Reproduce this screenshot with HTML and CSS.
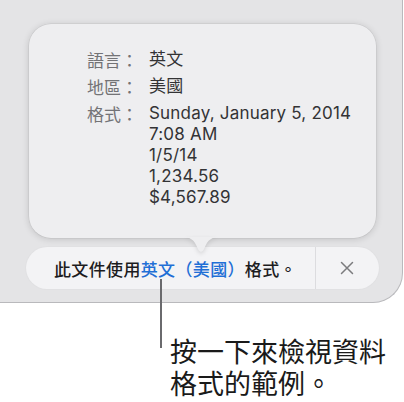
FILE: index.html
```html
<!DOCTYPE html>
<html lang="zh-Hant">
<head>
<meta charset="utf-8">
<link rel="stylesheet" href="styles.css">
</head>
<body>
<div class="stage">
  <div class="window">
    <div class="popover">
      <div class="info">
        <div class="label">語言：</div>
        <div class="value">英文</div>
        <div class="label">地區：</div>
        <div class="value">美國</div>
        <div class="label">格式：</div>
        <div class="value">Sunday, January 5, 2014<br>7:08 AM<br>1/5/14<br>1,234.56<br>$4,567.89</div>
      </div>
      <svg class="arrow" width="40" height="17" viewBox="0 0 40 17">
        <path d="M0 0 C 9 0, 13 2, 16.5 11 Q 20 18.5 23.5 11 C 27 2, 31 0, 40 0 Z" fill="#eeeef0"/>
      </svg>
    </div>
    <div class="bar">
      <div class="message">此文件使用<span class="link">英文（美國）</span>格式。</div>
      <div class="close">
        <svg width="14" height="14" viewBox="0 0 14 14"><path d="M1.5 1.5 L12.5 12.5 M12.5 1.5 L1.5 12.5" stroke="#7b7b7e" stroke-width="1.5" stroke-linecap="round"/></svg>
      </div>
    </div>
  </div>
  <div class="leader"></div>
  <div class="callout">按一下來檢視資料<br>格式的範例。</div>
</div>
</body>
</html>
```
FILE: styles.css
```css
html, body {
  margin: 0;
  padding: 0;
  background: #ffffff;
}
.stage {
  position: relative;
  width: 404px;
  height: 402px;
  overflow: hidden;
  font-family: "Inter", "Noto Sans CJK TC", sans-serif;
}
.window {
  box-sizing: border-box;
  width: 403px;
  height: 303px;
  background: #e4e4e6;
  border-right: 1px solid #b9b9bc;
  border-bottom: 1px solid #b9b9bc;
  border-bottom-right-radius: 30px;
  padding-top: 24px;
  padding-left: 26px;
}
.popover {
  position: relative;
  z-index: 2;
  box-sizing: border-box;
  width: 347px;
  height: 214px;
  margin-left: 3px;
  background: #eeeef0;
  border-radius: 22px;
  box-shadow: 0 1px 7px rgba(0, 0, 0, 0.16), 0 0 0 0.5px rgba(0, 0, 0, 0.08);
  padding: 25px 0 0 58px;
}
.arrow {
  position: absolute;
  left: 152px;
  top: 213px;
  filter: drop-shadow(0 2px 2px rgba(0, 0, 0, 0.12));
}
.info {
  display: grid;
  grid-template-columns: 62px auto;
  row-gap: 6px;
  font-size: 17px;
  line-height: 21px;
}
.label {
  color: #737376;
  font-family: "Noto Sans CJK TC", sans-serif;
}
.value {
  color: #333335;
  letter-spacing: 0.2px;
}
.bar {
  display: flex;
  width: 353px;
  height: 42px;
  margin-top: 9px;
  background: #f3f3f5;
  border-radius: 21px;
  box-shadow: 0 0 2px rgba(0, 0, 0, 0.05);
}
.message {
  box-sizing: border-box;
  width: 290px;
  padding-left: 28px;
  border-right: 1px solid #dcdcdf;
  display: flex;
  align-items: center;
  font-family: "Noto Sans CJK TC", sans-serif;
  font-size: 17px;
  font-weight: 500;
  letter-spacing: 0.35px;
  color: #1c1c1e;
  white-space: nowrap;
}
.link {
  color: #1f6fd6;
}
.close {
  flex: 1;
  display: flex;
  align-items: center;
  justify-content: center;
}
.close svg {
  display: block;
  margin-left: -1px;
}
.leader {
  position: absolute;
  z-index: 3;
  left: 160px;
  top: 279px;
  width: 2px;
  height: 69px;
  background: #6a6a6d;
}
.callout {
  margin-top: 32px;
  padding-left: 170px;
  font-family: "Noto Sans CJK TC", sans-serif;
  font-size: 27px;
  line-height: 32px;
  color: #1a1a1a;
}
```
